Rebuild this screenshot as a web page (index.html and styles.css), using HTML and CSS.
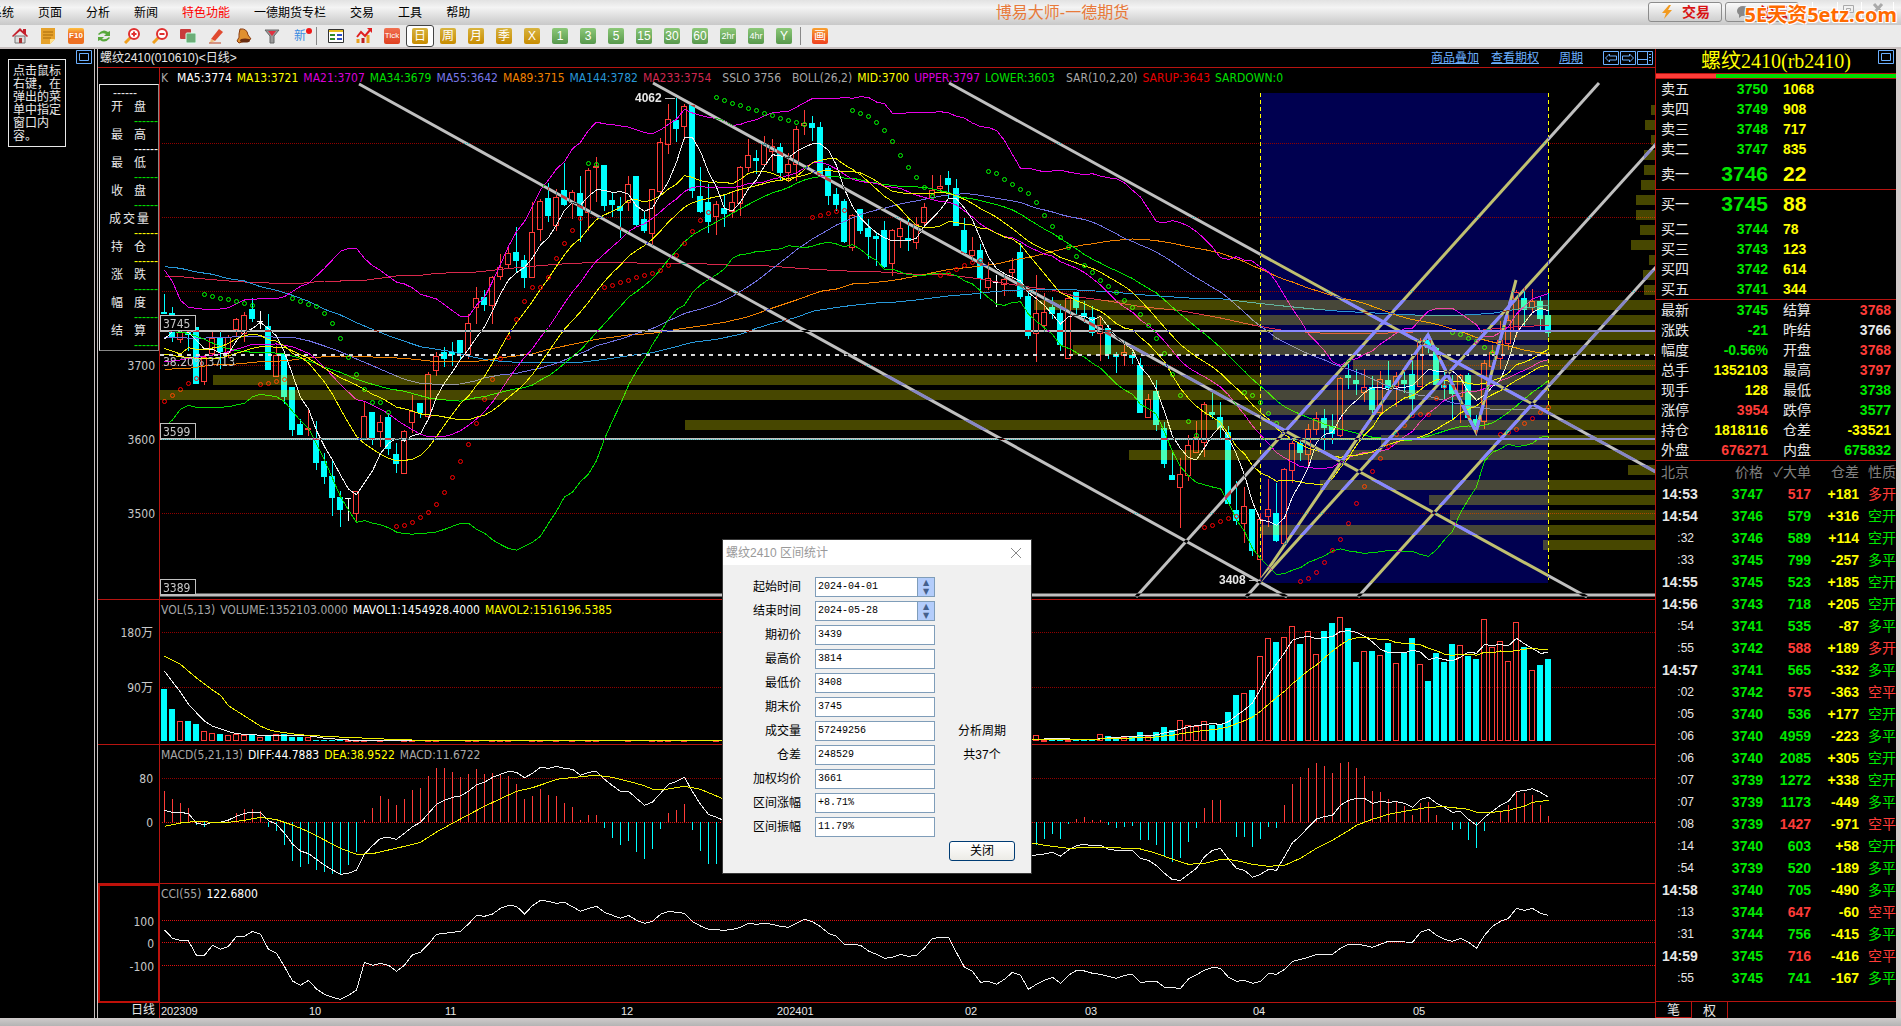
FILE: index.html
```html
<!DOCTYPE html>
<html lang="zh-CN">
<head>
<meta charset="utf-8">
<title>博易大师-一德期货</title>
<link rel="stylesheet" href="styles.css">
</head>
<body>
<div class="app">
  <header class="menubar">
    <nav class="menu">
      <a href="#">系统</a><a href="#">页面</a><a href="#">分析</a><a href="#">新闻</a><a href="#" class="hot">特色功能</a><a href="#">一德期货专栏</a><a href="#">交易</a><a href="#">工具</a><a href="#">帮助</a>
    </nav>
    <h1 class="app-title">博易大师-一德期货</h1>
    <div class="menu-actions">
      <button class="top-btn" type="button"><svg width="14" height="14" viewBox="0 0 14 14"><path d="M9 0 2 8h4L4 14l8-9H8l3-5z" fill="#f29a1f"/></svg>交易</button>
      <button class="top-btn" type="button"><svg width="16" height="14" viewBox="0 0 16 14"><ellipse cx="7" cy="6" rx="6" ry="5" fill="#888"/><path d="M3 9v4l4-3z" fill="#888"/><circle cx="12" cy="8" r="4" fill="#999"/></svg>论坛</button>
      <svg class="window-btns" width="86" height="24" viewBox="0 0 86 24"><g fill="none" stroke="#fff"><path d="M2.5 0v18M27.500 0v18M51.500 0v18M83.500 0v18"/></g><g fill="none" stroke="#aaa"><path d="M8.500 8.500h10v3h-10zM33.500 3.500h10v7h-10zM36.500 6.500h4v2h-4z"/><path d="m64 2 8 9m0-9-8 9" stroke-width="3"/></g></svg>
    </div>
    <div class="watermark">5E天资5etz.com</div>
  </header>

  <div class="toolbar">
    <button class="tool" type="button" aria-label="首页"><svg viewBox="0 0 16 16"><path d="M3 8h10v7H3z" fill="#ddd" stroke="#777"/><path d="M0 8 8 0l3 3V1h3v5l2 2-1 1-7-6-7 6z" fill="#c4202c"/><path d="M7 10h3v5H7z" fill="#a33"/></svg></button>
    <button class="tool" type="button" aria-label="便签"><svg viewBox="0 0 16 16"><path d="M1 0h14v11l-5 5H1z" fill="#e6a22c"/><path d="M3 4h10M3 7h10M3 10h8" stroke="#a86a08"/><path d="M10 16v-5h5z" fill="#ffe08a"/></svg></button>
    <button class="tool" type="button"><span class="chip chip-f10">F10</span></button>
    <button class="tool" type="button" aria-label="刷新"><svg viewBox="0 0 16 16"><path d="M2 6q5-6 10-2l2-1v5H8l2-2Q6 4 3 7zM14 10q-5 6-10 2l-2 1V9h6l-2 2q4 1 7-2z" fill="#58a83c"/></svg></button>
    <button class="tool" type="button" aria-label="放大"><svg viewBox="0 0 16 16"><path d="m1 15 6-6" stroke="#f0a020" stroke-width="3"/><circle cx="10" cy="6" r="5" fill="#fff" stroke="#e03030" stroke-width="2"/><path d="M7.500 6h5M10 3.500v5" stroke="#e03030" stroke-width="2"/></svg></button>
    <button class="tool" type="button" aria-label="缩小"><svg viewBox="0 0 16 16"><path d="m1 15 6-6" stroke="#f0a020" stroke-width="3"/><circle cx="10" cy="6" r="5" fill="#fff" stroke="#e03030" stroke-width="2"/><path d="M7.500 6h5" stroke="#e03030" stroke-width="2"/></svg></button>
    <button class="tool" type="button" aria-label="叠加"><svg viewBox="0 0 16 16"><rect x="0" y="1" width="11" height="10" rx="1" fill="#c83c3c"/><rect x="6" y="5" width="10" height="10" rx="1" fill="#6cae78" stroke="#dfe"/></svg></button>
    <button class="tool" type="button" aria-label="画线"><svg viewBox="0 0 16 16"><path d="m3 11 8-10 4 3-8 9z" fill="#e04a30"/><path d="m3 11-1 4 5-2z" fill="#f0c080"/><path d="M1 15h12" stroke="#c04020"/></svg></button>
    <button class="tool" type="button" aria-label="预警"><svg viewBox="0 0 16 16"><path d="M4 1q7-1 8 6l3 4-12 4-2-2q3-4 2-7z" fill="#e09030" stroke="#8a3c10"/><ellipse cx="9" cy="12.500" rx="5" ry="2" fill="#6a2c10"/></svg></button>
    <button class="tool" type="button" aria-label="筛选"><svg viewBox="0 0 16 16"><path d="M1 2h14l-5 6v7H6V8z" fill="#999" stroke="#666"/><path d="M4 3h8L8 8z" fill="#e03040"/></svg></button>
    <button class="tool tool-new" type="button">新</button>
    <span class="tool-sep"></span>
    <button class="tool" type="button" aria-label="报价"><svg viewBox="0 0 16 16"><path d="M.5 1.500h15v13H.5z" fill="#fff" stroke="#333"/><path d="M1 3h14" stroke="#e6c020" stroke-width="2"/><path d="M2 7h5M2 11h5" stroke="#2a8a2a" stroke-width="2"/><path d="M9 7h5M9 11h5" stroke="#2a50c8" stroke-width="2"/></svg></button>
    <button class="tool" type="button" aria-label="走势"><svg viewBox="0 0 16 16"><path d="M2 11v4M12 7v8" stroke="#e8a020" stroke-width="3"/><path d="M7 10v5" stroke="#c02020" stroke-width="3"/><path d="m1 9 4-5 4 4 5-6" stroke="#e02020" stroke-width="2" fill="none"/><path d="M11 0h5v5z" fill="#e02020"/></svg></button>
    <button class="tool" type="button"><span class="chip chip-red">Tick</span></button>
    <button class="tool selected" type="button"><span class="chip chip-gold">日</span></button>
    <button class="tool" type="button"><span class="chip chip-gold">周</span></button>
    <button class="tool" type="button"><span class="chip chip-gold">月</span></button>
    <button class="tool" type="button"><span class="chip chip-gold">季</span></button>
    <button class="tool" type="button"><span class="chip chip-gold">X</span></button>
    <button class="tool" type="button"><span class="chip chip-green">1</span></button>
    <button class="tool" type="button"><span class="chip chip-green">3</span></button>
    <button class="tool" type="button"><span class="chip chip-green">5</span></button>
    <button class="tool" type="button"><span class="chip chip-green">15</span></button>
    <button class="tool" type="button"><span class="chip chip-green">30</span></button>
    <button class="tool" type="button"><span class="chip chip-green">60</span></button>
    <button class="tool" type="button"><span class="chip chip-green small">2hr</span></button>
    <button class="tool" type="button"><span class="chip chip-green small">4hr</span></button>
    <button class="tool" type="button"><span class="chip chip-green">Y</span></button>
    <span class="tool-sep"></span>
    <button class="tool" type="button"><span class="chip chip-orange">画</span></button>
  </div>

  <main class="workspace">
    <aside class="side">
      <p class="side-hint">点击鼠标右键，在弹出的菜单中指定窗口内容。</p>
      <button class="frame-btn" type="button" aria-label="最大化"><svg width="16" height="14" viewBox="0 0 16 14"><path d="M.5.5h15v13H.5zM3.500 3.500h9v7h-9z" fill="none" stroke="#6cb0ff"/></svg></button>
    </aside>

    <section class="chart">
      <div class="chart-title">
        <h2>螺纹2410(010610)&lt;日线&gt;</h2>
        <nav class="chart-links">
          <a href="#">商品叠加</a><a href="#">查看期权</a><a href="#" class="period">周期</a>
          <svg width="50" height="14" viewBox="0 0 50 14" fill="none" stroke="#6cb0ff"><path d="M.5.5h15v13H.5zM17.500.5h15v13h-15zM34.500.5h15v13h-15z"/><path d="m2.500 7 4-4v2h7v4h-7v2zM30.500 7l-4-4v2h-7v4h7v2zM34.500 8.500h10M44.500.5v13M46 3.500h2M46 6.500h2M46 9.500h2"/></svg>
        </nav>
      </div>
      <div class="panels">
        <svg class="axis" id="axis-price"></svg>
        <div class="plot">
          <p class="legend legend-price">
            <span class="kind">K</span><span class="c-white">MA5:3774</span><span class="c-yellow">MA13:3721</span><span class="c-magenta">MA21:3707</span><span class="c-lime">MA34:3679</span><span class="c-violet">MA55:3642</span><span class="c-orange">MA89:3715</span><span class="c-blue">MA144:3782</span><span class="c-crimson">MA233:3754</span><span class="lead">SSLO 3756</span><span class="lead">BOLL(26,2)</span><span class="c-yellow">MID:3700</span><span class="c-magenta">UPPER:3797</span><span class="c-lime">LOWER:3603</span><span class="lead">SAR(10,2,20)</span><span class="c-red">SARUP:3643</span><span class="c-lime">SARDOWN:0</span>
          </p>
          <svg class="canvas" id="plot-price"></svg>
        </div>

        <svg class="axis" id="axis-vol"></svg>
        <div class="plot">
          <p class="legend"><span>VOL(5,13)</span><span>VOLUME:1352103.0000</span><span class="c-white">MAVOL1:1454928.4000</span><span class="c-yellow">MAVOL2:1516196.5385</span></p>
          <svg class="canvas" id="plot-vol"></svg>
        </div>

        <svg class="axis" id="axis-macd"></svg>
        <div class="plot">
          <p class="legend"><span>MACD(5,21,13)</span><span class="c-white">DIFF:44.7883</span><span class="c-yellow">DEA:38.9522</span><span>MACD:11.6722</span></p>
          <svg class="canvas" id="plot-macd"></svg>
        </div>

        <svg class="axis active" id="axis-cci"></svg>
        <div class="plot">
          <p class="legend"><span>CCI(55)</span><span class="c-white">122.6800</span></p>
          <svg class="canvas" id="plot-cci"></svg>
        </div>

        <div class="axis-name">日线</div>
        <svg class="dates" id="dates"></svg>
      </div>

      <dl class="cursor-box">
        <div><dt></dt><dd class="first">------</dd></div>
        <div><dt>开盘</dt><dd class="c-lime">------</dd></div>
        <div><dt>最高</dt><dd class="c-white">------</dd></div>
        <div><dt>最低</dt><dd class="c-lime">------</dd></div>
        <div><dt>收盘</dt><dd class="c-lime">------</dd></div>
        <div><dt class="three">成交量</dt><dd class="c-yellow">------</dd></div>
        <div><dt>持仓</dt><dd class="c-yellow">------</dd></div>
        <div><dt>涨跌</dt><dd class="c-lime">------</dd></div>
        <div><dt>幅度</dt><dd class="c-lime">------</dd></div>
        <div><dt>结算</dt><dd class="c-lime">------</dd></div>
      </dl>
    </section>

    <section class="quote">
      <div class="quote-title">
        <h2>螺纹2410(rb2410)</h2>
        <button class="frame-btn" type="button" aria-label="最大化"><svg width="16" height="14" viewBox="0 0 16 14"><path d="M.5.5h15v13H.5zM3.500 3.500h9v7h-9z" fill="none" stroke="#6cb0ff"/></svg></button>
      </div>
      <div class="ratio"><span class="ratio-sell"></span></div>
      <table class="book">
        <tbody>
          <tr><th>卖五</th><td>3750</td><td>1068</td></tr>
          <tr><th>卖四</th><td>3749</td><td>908</td></tr>
          <tr><th>卖三</th><td>3748</td><td>717</td></tr>
          <tr><th>卖二</th><td>3747</td><td>835</td></tr>
          <tr class="best"><th>卖一</th><td>3746</td><td>22</td></tr>
        </tbody>
        <tbody>
          <tr class="best"><th>买一</th><td>3745</td><td>88</td></tr>
          <tr><th>买二</th><td>3744</td><td>78</td></tr>
          <tr><th>买三</th><td>3743</td><td>123</td></tr>
          <tr><th>买四</th><td>3742</td><td>614</td></tr>
          <tr><th>买五</th><td>3741</td><td>344</td></tr>
        </tbody>
      </table>
      <table class="stats">
        <tbody>
          <tr><th>最新</th><td class="dn">3745</td><th>结算</th><td class="up">3768</td></tr>
          <tr><th>涨跌</th><td class="dn">-21</td><th>昨结</th><td class="eq">3766</td></tr>
          <tr><th>幅度</th><td class="dn">-0.56%</td><th>开盘</th><td class="up">3768</td></tr>
          <tr><th>总手</th><td class="qty">1352103</td><th>最高</th><td class="up">3797</td></tr>
          <tr><th>现手</th><td class="qty">128</td><th>最低</th><td class="dn">3738</td></tr>
          <tr><th>涨停</th><td class="up">3954</td><th>跌停</th><td class="dn">3577</td></tr>
          <tr><th>持仓</th><td class="qty">1818116</td><th>仓差</th><td class="qty">-33521</td></tr>
          <tr><th>外盘</th><td class="up">676271</td><th>内盘</th><td class="dn">675832</td></tr>
        </tbody>
      </table>
      <table class="ticks">
        <thead><tr><th class="t">北京</th><th>价格</th><th>✓大单</th><th>仓差</th><th>性质</th></tr></thead>
        <tbody id="ticks"></tbody>
      </table>
      <div class="tabs"><button class="tab on" type="button">笔</button><button class="tab" type="button">权</button></div>
    </section>
  </main>

  <footer class="statusbar"></footer>
</div>

<form class="dialog">
  <div class="dialog-head"><h2>螺纹2410 区间统计</h2><button class="dialog-x" type="button" aria-label="关闭窗口"><svg width="12" height="12" viewBox="0 0 12 12"><path d="m1 1 10 10M11 1 1 11" stroke="#888" fill="none"/></svg></button></div>
  <div class="dialog-body">
    <label for="f1">起始时间</label><div class="field"><input id="f1" value="2024-04-01"><span class="spin"><button type="button" aria-label="增加">▲</button><button type="button" aria-label="减少">▼</button></span></div><span></span>
    <label for="f2">结束时间</label><div class="field"><input id="f2" value="2024-05-28"><span class="spin"><button type="button" aria-label="增加">▲</button><button type="button" aria-label="减少">▼</button></span></div><span></span>
    <label for="f3">期初价</label><div class="field"><input id="f3" value="3439"></div><span></span>
    <label for="f4">最高价</label><div class="field"><input id="f4" value="3814"></div><span></span>
    <label for="f5">最低价</label><div class="field"><input id="f5" value="3408"></div><span></span>
    <label for="f6">期末价</label><div class="field"><input id="f6" value="3745"></div><span></span>
    <label for="f7">成交量</label><div class="field"><input id="f7" value="57249256"></div><span class="note">分析周期</span>
    <label for="f8">仓差</label><div class="field"><input id="f8" value="248529"></div><span class="note">共37个</span>
    <label for="f9">加权均价</label><div class="field"><input id="f9" value="3661"></div><span></span>
    <label for="f10">区间涨幅</label><div class="field"><input id="f10" value="+8.71%"></div><span></span>
    <label for="f11">区间振幅</label><div class="field"><input id="f11" value="11.79%"></div><span></span>
    <button class="close-btn" type="button">关闭</button>
  </div>
</form>
<script src="chart.js"></script>
</body>
</html>
```
FILE: styles.css
```css
* { box-sizing: border-box; }
body {
  margin: 0;
  background: #000;
  color: #e8e8e8;
  font: 12px/16px "Liberation Sans", "Noto Sans CJK SC", sans-serif;
  overflow: hidden;
}
button { font: inherit; padding: 0; border: 0; background: none; color: inherit; }
h1, h2, p, dl, dd { margin: 0; font-weight: normal; }
h2 { font-size: 12px; }
a { color: inherit; text-decoration: none; }
table { border-collapse: collapse; table-layout: fixed; width: 100%; }
th, td { padding: 0; font-weight: normal; }
svg { display: block; }
.app { height: 100vh; display: grid; grid-template-rows: 25px 24px minmax(0, 1fr) 8px; }

/* menu */
.menubar {
  position: relative;
  display: grid;
  grid-template-columns: 1fr auto 1fr;
  align-items: center;
  background: linear-gradient(#e2e2e2, #f4f4f4 30%, #c8c8c8);
  color: #000;
}
.menu { display: flex; gap: 24px; margin-left: -10px; white-space: nowrap; }
.hot { color: #f00; }
.app-title { font-size: 16px; line-height: 24px; color: #e87a3a; padding-left: 224px; }
.menu-actions { display: flex; gap: 3px; justify-content: flex-end; align-self: start; padding: 2px 5px 0 0; }
.top-btn {
  display: flex;
  align-items: center;
  justify-content: center;
  gap: 8px;
  width: 74px;
  height: 20px;
  border: 1px solid #8c8c8c;
  border-radius: 3px;
  background: linear-gradient(#fafafa, #cfcfcf);
  color: #d81414;
  font-size: 14px;
  font-weight: bold;
}
.window-btns { margin-left: 8px; }
.watermark {
  position: absolute;
  right: 4px;
  top: 1px;
  font: bold 20px/28px "Noto Sans", "Noto Sans CJK SC", sans-serif;
  color: #ff6a00;
  text-shadow: 1px 1px #fff, -1px -1px #fff, 1px -1px #fff, -1px 1px #fff;
}

/* toolbar */
.toolbar { display: flex; align-items: center; background: #ebebeb; border-bottom: 2px solid #c8c0c0; padding-left: 6px; }
.tool { width: 28px; height: 22px; display: grid; place-items: center; }
.tool svg { width: 16px; height: 16px; }
.tool-new { position: relative; color: #3c8ce0; }
.tool-new::after { content: ""; position: absolute; right: 2px; top: 3px; width: 6px; height: 6px; border-radius: 50%; background: #f01818; }
.tool.selected { border: 1px solid #444; border-radius: 3px; background: #fff; }
.tool-sep { width: 8px; height: 18px; border-left: 1px solid #888; margin-left: 2px; margin-right: -2px; }
.chip { width: 16px; height: 16px; border-radius: 2px; color: #fff; text-align: center; font-size: 12px; line-height: 16px; }
.chip.small { font-size: 9px; }
.chip-red { background: linear-gradient(#f07050, #e04020); font-size: 8px; }
.chip-f10 { background: linear-gradient(#ffc040, #ee7022 40%); font-size: 8px; font-weight: bold; }
.chip-gold { background: linear-gradient(#d8b440, #c88c00); }
.chip-green { background: linear-gradient(#8cc878, #58984c); }
.chip-orange { background: linear-gradient(#f8a030, #f04020); }

/* workspace */
.workspace { display: grid; grid-template: minmax(0, 1fr) / 98px minmax(0, 1fr) 246px; min-height: 0; }
.side { display: flex; align-items: flex-start; justify-content: space-between; padding: 0 0 0 8px; border-right: 4px double #c8c0c0; }
.side-hint { width: 58px; margin-top: 10px; padding: 5px 3px 3px 4px; border: 1px solid #e8e8e8; line-height: 13px; }
.frame-btn { margin: 1px 2px 0 0; align-self: start; }

.chart { position: relative; display: grid; grid-template-rows: 19px minmax(0, 1fr); min-width: 0; }
.chart-title { display: flex; justify-content: space-between; align-items: center; border-bottom: 1px solid #b81410; padding: 0 2px; }
.chart-links { display: flex; gap: 12px; color: #6cb0ff; align-items: center; }
.chart-links a { text-decoration: underline; }
.chart-links .period { margin: 0 8px; }
.panels {
  display: grid;
  grid-template-columns: 61px minmax(0, 1fr);
  grid-template-rows: minmax(0, 532fr) minmax(0, 145fr) minmax(0, 139fr) minmax(0, 119fr) 15px;
  min-height: 0;
}
.axis { width: 100%; height: 100%; min-height: 0; border-bottom: 1px solid #b81410; }
.axis.active { border: 2px solid #c01008; border-right-width: 1px; }
.plot { display: grid; grid-template: minmax(0, 1fr) / minmax(0, 1fr); border-left: 1px solid #b81410; border-bottom: 1px solid #b81410; min-height: 0; }
.canvas { grid-area: 1 / 1; width: 100%; height: 100%; min-height: 0; shape-rendering: crispEdges; isolation: isolate; }
.legend {
  grid-area: 1 / 1;
  z-index: 1;
  display: flex;
  gap: 5px;
  height: 16px;
  margin: 2px 1px;
  color: #a8a8a8;
  font: 12px/16px "DejaVu Sans Condensed", "Noto Sans", sans-serif;
  white-space: nowrap;
}
.legend-price .kind { padding-right: 4px; }
.legend-price .lead { padding-left: 6px; }
.axis text, .canvas text { font: 12px "DejaVu Sans Condensed", "Noto Sans", "Noto Sans CJK SC", sans-serif; fill: #c8c8c8; }
.axis text { text-anchor: end; }
.canvas .mark { font: bold 12px "Liberation Sans", sans-serif; fill: #e8e8e8; }
.axis-name { text-align: right; padding-right: 4px; line-height: 15px; }
.dates { width: 100%; height: 15px; border-left: 1px solid #b81410; }
.dates text { font: 11px "Liberation Sans", sans-serif; fill: #e8e8e8; }
.c-white { color: #fff; }
.c-yellow { color: #ff0; }
.c-magenta { color: #d800d8; }
.c-lime { color: #00e000; }
.c-violet { color: #7878e8; }
.c-orange { color: #f08000; }
.c-blue { color: #2898d8; }
.c-crimson { color: #d02850; }
.c-red { color: #e80000; }

/* floating cursor values */
.cursor-box {
  position: absolute;
  left: 1px;
  top: 35px;
  width: 60px;
  height: 267px;
  border: 1px solid #e8e8e8;
  border-right-color: #888;
  border-bottom-color: #888;
  background: #000;
}
.cursor-box div { height: 28px; }
.cursor-box div:first-child { height: 15px; }
.cursor-box dt { height: 14px; line-height: 14px; padding: 0 12px 0 11px; text-align-last: justify; }
.cursor-box dt:empty { display: none; }
.cursor-box .three { padding: 0 9px; }
.cursor-box dd { text-align: right; height: 14px; line-height: 14px; }
.cursor-box .first { text-align: center; padding-right: 8px; line-height: 16px; }

/* quote */
.quote { display: flex; flex-direction: column; border-left: 1px solid #b81410; border-right: 5px solid #d4cccc; min-width: 0; background: #000; }
.quote-title { display: grid; grid-template-columns: 18px 1fr 18px; height: 24px; }
.quote-title h2 { grid-column: 2; text-align: center; font: 20px/24px "Liberation Serif", "Noto Sans CJK SC", serif; color: #ff0; }
.ratio { height: 6px; border: solid #b81410; border-width: 1px 0; background: #00e000; }
.ratio-sell { display: block; width: 25%; height: 4px; background: #ff3c38; }
.book th, .stats th { text-align: left; font-size: 14px; line-height: 20px; padding-left: 5px; }
.book td, .stats td, .ticks td { font-weight: bold; font-size: 14px; }
.book tr { height: 20px; }
.book .best { height: 30px; }
.book tbody { border-bottom: 1px solid #b81410; }
.book th { width: 50px; }
.book td:nth-child(2) { width: 62px; text-align: right; color: #00e800; }
.book td:nth-child(3) { padding-left: 15px; color: #ff0; }
.book .best td { font-size: 21px; }
.stats tbody { border-bottom: 1px solid #b81410; }
.stats tr { height: 20px; }
.stats th { width: 37px; }
.stats th:nth-child(3) { width: 52px; padding-left: 15px; }
.stats td { text-align: right; }
.stats td:nth-child(2) { width: 75px; }
.stats td:nth-child(4) { padding-right: 5px; }
.up { color: #ff3c38; }
.dn { color: #00e800; }
.eq { color: #e8e8e8; }
.qty { color: #ff0; }
.ticks th { font-size: 14px; color: #808080; text-align: right; }
.ticks tr { height: 22px; }
.ticks td { text-align: right; white-space: nowrap; }
.ticks th.t { width: 48px; text-align: left; padding-left: 5px; }
.ticks th:nth-child(2) { width: 59px; }
.ticks th:nth-child(3) { width: 48px; white-space: nowrap; }
.ticks th:nth-child(4) { width: 48px; }
.ticks td.t { text-align: left; padding-left: 6px; }
.ticks td.s { font-size: 12px; font-weight: normal; text-align: right; padding-right: 10px; }
.ticks td:last-child { font-weight: normal; }
.tabs { margin-top: auto; display: flex; height: 17px; border-top: 1px solid #b81410; }
.tab { width: 36px; font-size: 13px; line-height: 15px; border-right: 1px solid #b81410; }
.tab.on { border-bottom: 1px solid #b81410; }
.statusbar { background: linear-gradient(#cfcbcb, #b4b4b4); }

/* range statistics window */
.dialog { position: absolute; left: 722px; top: 539px; width: 310px; background: #f0f0f0; color: #000; border: 1px solid #383838; }
.dialog-head { display: flex; justify-content: space-between; align-items: center; height: 25px; padding: 0 9px 0 3px; background: #fff; color: #999; }
.dialog-body { display: grid; grid-template-columns: 78px 120px 1fr; column-gap: 14px; row-gap: 4px; padding: 12px 16px 12px 0; }
.dialog-body label { text-align: right; line-height: 20px; }
.field { display: flex; height: 20px; border: 1px solid #7f9db9; background: #fff; }
.field input { flex: 1; min-width: 0; border: 0; padding: 0 2px; background: none; font: 10px/18px "Liberation Mono", monospace; color: #000; }
.spin { width: 17px; border-left: 1px solid #7f9db9; background: #b4cdfb; display: grid; grid-template-rows: 9px 9px; }
.spin button { font: 8px/9px "DejaVu Sans", sans-serif; color: #44608c; }
.note { text-align: center; line-height: 20px; }
.close-btn { grid-column: 3; height: 20px; border: 1px solid #003c74; border-radius: 3px; background: linear-gradient(#fff, #ecebe6); }
```
FILE: chart.js
```js
// Levels are stored in thirds of a pixel; each pane subtracts its own offset.
var STEP = 8;
var CY = '#00ffff', RD = '#ff3c38';

function cx(i) { return 4 + STEP * i; }

// kind, high, body top, body bottom, low
var bars = [
'd642,697,702,702','d680,698,773,785','u752,755,778,790','d740,752,765,812','d740,741,911,911','u825,830,902,914','u755,775,820,825','d752,772,815,866','u765,772,815,835','u714,718,748,768',
'u697,706,758,785','d655,687,716,726','w692,723,725,746','d702,738,869,869','u798,826,887,887','d820,822,950,971','d921,921,1049,1067','d1018,1032,1065,1065','u985,1045,1048,1067','d1023,1078,1149,1170',
'd1118,1143,1190,1212','d1138,1188,1253,1307','d1232,1251,1289,1340','w1255,1255,1257,1322','u1234,1234,1300,1322','u963,1009,1075,1078','d996,996,1077,1094','u1005,1027,1052,1101','d1000,1011,1106,1124','d1088,1122,1152,1178',
'u1050,1054,1178,1178','u945,994,1025,1060','d968,969,1000,1014','u877,883,1007,1010','u815,829,869,887','d802,816,837,860','d786,816,826,857','d780,780,819,840','u703,728,821,836','u622,653,680,731',
'd630,651,675,692','u588,592,674,731','u522,562,587,601','u502,518,553,563','d441,516,543,578','d525,540,594,623','u365,455,592,594','u358,364,446,482','d310,354,408,426','u328,352,434,453',
'd249,330,375,377','u330,337,365,417','d288,339,408,485','u265,271,395,452','u232,258,262,365','d255,255,377,392','d335,360,375,410','d350,378,392,473','u288,313,365,392','d288,289,435,440',
'd392,417,453,459','u327,328,458,497','u174,187,332,340','u72,118,191,221','d55,120,147,185','u72,79,137,180','d75,76,332,354','d261,348,396,399','d312,366,426,459','u363,373,409,464',
'd341,384,402,440','u332,367,392,413','u258,262,368,408','u177,226,262,276','d209,234,242,282','u168,192,253,256','u177,199,212,273','d190,201,279,299','u220,253,277,304','u139,148,253,302',
'u90,130,134,165','d109,129,144,182','d126,141,285,290','d258,264,348,374','d325,342,374,393','d358,363,486,488','u402,406,502,512','d387,387,453,461','d418,445,471,536','d458,467,476,558',
'd424,450,561,563','u446,451,550,587','u421,443,469,504','d413,474,482,512','u412,433,485,506','u370,382,425,438','u285,331,352,355','u286,318,325,340','d273,294,315,357','d297,324,437,438',
'd414,450,519,521','u471,511,524,545','d492,510,597,657','u546,595,621,629','w585,606,608,682','u585,597,613,648','u534,566,577,600','d489,516,651,657','d630,648,768,776','u586,700,758,846',
'u639,697,734,755','d651,682,702,718','d672,699,794,812','u652,655,835,836','d636,636,684,705','d663,699,711,730','d678,711,758,768','u712,735,760,843','d736,744,822,838','d815,823,830,878',
'u784,817,825,857','d815,825,835,852','d833,855,998,1000','u942,956,1012,1015','d899,933,1035,1053','d1025,1043,1152,1164','d1118,1186,1200,1200','u1135,1183,1222,1343','u1065,1094,1184,1202','u1024,1070,1117,1118',
'u966,971,1087,1131','d939,996,1005,1018','d966,1011,1045,1076','d1037,1056,1271,1273','d1203,1290,1323,1334','u1220,1279,1330,1388','d1286,1287,1412,1428','u1300,1318,1436,1504','u1198,1288,1307,1340','d1210,1298,1383,1385',
'u1165,1168,1390,1395','u1083,1090,1171,1210','d1078,1090,1118,1144','u1033,1048,1123,1165','u996,1015,1046,1066','d988,1014,1043,1110','d1002,1038,1061,1092','u890,895,1066,1072','d852,885,895,928','d868,900,912,944',
'u868,921,937,966','d887,921,990,1000','u872,898,997,1005','d844,900,925,930','u876,888,918,980','d870,900,911,940','d838,881,957,992','u775,781,919,920','d762,780,803,820','d800,804,914,915',
'd875,915,925,958','d885,912,942,1018','u882,886,948,1030','d878,886,1013,1015','d1005,1018,1037,1063','u840,850,1023,1048','u795,815,857,870','u722,780,835,868','u700,720,790,810','u630,635,750,770',
'd622,653,690,737','u627,662,680,700','d652,662,717,757','d640,705,758,772'
].map(function (s) {
  var n = s.slice(1).split(',').map(Number);
  return { k: s[0], h: n[0], t: n[1], b: n[2], l: n[3], c: s[0] === 'd' ? n[2] : n[1] };
});
var closes = bars.map(function (b) { return b.c; });

// "index:level" pairs
function pts(s) { return s.trim().split(/\s+/).map(function (p) { return p.split(':').map(Number); }); }
function run(start, list) { return list.map(function (v, k) { return [start + k, v]; }); }

function average(src, n) {
  var out = [];
  for (var i = n - 1; i < src.length; i++) {
    var s = 0;
    for (var k = 0; k < n; k++) s += src[i - k];
    out.push([i, s / n]);
  }
  return out;
}
function band(src, n, dir) {
  return average(src, n).map(function (p) {
    var v = 0;
    for (var k = 0; k < n; k++) v += Math.pow(src[p[0] - k] - p[1], 2);
    return [p[0], p[1] + dir * 2 * Math.sqrt(v / n)];
  });
}

function Pane(id, off) {
  this.el = document.getElementById(id);
  this.off = off;
  this.out = '';
  this.w = this.el.clientWidth;
}
Pane.prototype.y = function (v) { return Math.round(v / 3 + this.off); };
Pane.prototype.rect = function (x, y, w, h, a) { this.out += '<rect x="' + x + '" y="' + y + '" width="' + w + '" height="' + h + '" ' + a + '/>'; };
Pane.prototype.line = function (x1, y1, x2, y2, a) { this.out += '<path d="M' + x1 + ' ' + y1 + 'L' + x2 + ' ' + y2 + '" fill="none" ' + a + '/>'; };
Pane.prototype.text = function (x, y, s, c) { this.out += '<text x="' + x + '" y="' + y + '" class="' + (c || '') + '">' + s + '</text>'; };
Pane.prototype.poly = function (list, color) {
  var me = this;
  this.out += '<polyline fill="none" stroke="' + color + '" points="' + list.map(function (p) {
    return (cx(p[0]) + 0.5) + ',' + (p[1] / 3 + me.off).toFixed(1);
  }).join(' ') + '"/>';
};
Pane.prototype.grid = function (levels, color) {
  var me = this;
  levels.forEach(function (v) { var y = me.y(v) + 0.5; me.line(2, y, me.w, y, 'stroke="' + color + '" stroke-dasharray="1 1"'); });
};
Pane.prototype.done = function () { this.el.innerHTML = this.out; };

function drawPrice() {
  var p = new Pane('plot-price', 12);
  var right = p.w;
  p.rect(1100, 25, 288, 490, 'fill="#000050"');
  p.grid([190, 412, 634, 856, 1078, 1300], '#900000');
  p.line(1100.5, 25, 1100.5, 515, 'stroke="#ff0" stroke-dasharray="4 3"');
  p.line(1388.5, 25, 1388.5, 515, 'stroke="#ff0" stroke-dasharray="4 3"');

  bars.forEach(function (b, i) {
    var x = cx(i), t = p.y(b.t), h = Math.max(1, p.y(b.b) - t), hi = p.y(b.h), lo = p.y(b.l);
    if (b.k === 'd') {
      p.rect(x, hi, 1, lo - hi, 'fill="' + CY + '"');
      p.rect(x - 3, t, 6, h, 'fill="' + CY + '"');
    } else if (b.k === 'w') {
      p.rect(x, hi, 1, lo - hi, 'fill="#fff"');
      p.rect(x - 3, t, 6, 1, 'fill="#fff"');
    } else {
      p.rect(x, hi, 1, t - hi, 'fill="' + RD + '"');
      p.rect(x, t + h, 1, Math.max(0, lo - p.y(b.b)), 'fill="' + RD + '"');
      p.rect(x - 2.5, t + 0.5, 5, h, 'fill="none" stroke="' + RD + '"');
    }
  });

  p.poly(pts('0:588 2:590 4:595 8:603 10:606 14:610 17:610 20:603 22:603 25:601 29:588 32:586 34:580 39:576 44:563 49:553 53:548 57:547 60:550 67:551 71:556 75:557 81:568 86:574 89:575 94:583 98:585 102:597 107:618 111:630 114:650 118:663 122:680 127:692 132:714 136:735 140:752 145:760 152:760 157:755 164:752 168:742 173:736'), '#d8284c');
  p.poly(pts('0:560 2:565 4:576 6:583 8:596 10:603 12:620 14:631 16:646 18:664 20:688 22:705 24:728 26:748 28:767 30:784 32:800 34:808 36:815 38:828 40:838 42:844 44:847 49:847 52:847 56:835 58:827 61:818 63:806 66:787 69:778 72:763 74:745 76:730 79:712 81:694 83:686 86:676 89:669 91:667 94:660 98:648 101:642 104:634 107:630 110:628 114:630 118:635 123:646 128:654 132:656 135:665 139:676 144:688 147:694 152:700 157:706 162:706 166:700 169:688 173:676'), '#2898d8');
  p.poly(pts('0:868 3:865 6:855 9:852 12:845 14:844 16:840 18:833 22:828 26:831 30:835 34:845 37:846 40:842 42:833 44:828 46:822 48:808 50:798 52:788 54:778 58:765 60:762 62:757 64:748 67:738 70:727 73:710 76:684 79:660 82:634 84:627 86:612').concat(average(closes, 89)), '#f08000');
  p.poly(pts('0:772 4:775 8:772 10:768 12:768 14:772 16:772 18:782 20:798 22:815 24:837 26:857 28:878 30:898 32:910 34:913 37:912 39:902 40:893 42:885 44:880 47:864 49:850 51:830 53:810').concat(average(closes, 55)), '#7070e0');
  p.poly(pts('0:740 1:755 3:760 5:778 7:800 9:812 11:817 13:817 15:822 17:835 19:850 20:862 22:877 24:898 26:913 28:926 30:934 32:947').concat(average(closes, 34)), '#00e800');
  p.poly(pts('0:845 2:840 4:832 7:822 9:808 11:793 14:792 16:800 18:820 19:838').concat(average(closes, 21)), '#e800e8');
  p.poly(pts('0:805 1:814 2:822 3:803 4:808 5:810 6:804 7:800 8:790 9:776 10:767 11:763').concat(average(closes, 13)), '#f0f000');
  p.poly(pts('0:822 2:830 4:835 7:834 9:820 11:805 12:800 15:802 18:835 20:865 22:893 24:915').concat(average(closes, 26)), '#f0f000');
  p.poly(pts('0:570 1:605 2:661 3:682 5:688 7:687 8:683 10:660 12:656 14:656 15:650 17:619 18:610 20:565 22:514 23:505 24:505').concat(band(closes, 26, -1)), '#e800e8');
  p.poly(pts('0:1040 1:1020 2:988 3:976 4:982 7:982 8:980 10:970 11:950 12:943 14:950 15:965 17:1022 18:1045 20:1140 22:1250 23:1290 24:1327').concat(band(closes, 26, 1)), '#00d800');
  p.poly(pts('0:777 1:755 2:752 3:757').concat(average(closes, 5)), '#f0f0f0');

  [['g', 5, [642, 649, 655, 658, 664, 670, 674]], ['g', 16, [655, 664, 673, 679, 700, 730, 775, 832, 883, 928, 967, 967, 997]],
   ['r', 0, [964, 946, 928, 910, 895]], ['r', 12, [913, 910, 904, 898]],
   ['r', 29, [1338, 1336, 1327, 1312, 1297, 1273, 1237, 1192, 1144, 1093, 1030, 958, 898, 835, 772, 718, 664, 622, 622, 592, 535, 490, 451, 415]],
   ['g', 53, [250, 253]], ['r', 55, [622, 616, 607, 601, 592, 586, 580, 571, 556, 526, 490, 454, 421, 397]],
   ['g', 69, [52, 61, 70, 76, 85, 91, 100, 106, 115, 121, 127, 133]], ['r', 81, [412, 406, 400, 394, 391]],
   ['g', 86, [91, 100, 109, 127, 151, 184, 226, 262, 292, 322, 349]], ['r', 97, [586, 580, 568, 556, 547, 541]],
   ['g', 103, [274, 280, 298, 313, 328, 340, 367, 406, 439, 472, 502, 529, 556, 577, 601, 619, 637, 661, 682, 703, 736, 775, 820, 883, 946, 1024, 1066]],
   ['r', 130, [1342, 1336, 1324, 1315, 1309]], ['g', 135, [937, 946, 967, 1000, 1030]],
   ['r', 142, [1504, 1495, 1477, 1447, 1411, 1378, 1330, 1270, 1219, 1174, 1135, 1099, 1063, 1036, 1006, 1003, 1003, 955, 919]],
   ['g', 161, [757, 763, 775, 784, 802, 817]], ['r', 167, [1063, 1057, 1048, 1030, 1015, 997, 982]]
  ].forEach(function (s) {
    run(s[1], s[2]).forEach(function (q) {
      p.out += '<circle cx="' + (cx(q[0]) + 0.5) + '" cy="' + (p.y(q[1]) + 0.5) + '" r="2" fill="none" shape-rendering="auto" stroke="' + (s[0] === 'g' ? '#00ff00' : '#ff0000') + '"/>';
    });
  });

  // traded-volume profile, one bar per price band, anchored to the right edge
  var clipAll = '', clipSel = '';
  [4, 10, 4, 11, 11, 14, 19, 19, 15, 24, 6, 12, 11, 621, 558, 382, 582, 302, 1442, 1496, 451, 970, 274, 526, 27, 335, 226, 205, 395, 112].forEach(function (w, k) {
    var x = right - w, y = 37 + 15 * k, sx = Math.max(x, 1100);
    p.rect(x, y, w, 10, 'fill="#ff0" fill-opacity="0.28"');
    clipAll += '<rect x="' + x + '" y="' + y + '" width="' + w + '" height="10"/>';
    if (sx < 1388) clipSel += '<rect x="' + sx + '" y="' + y + '" width="' + (1388 - sx) + '" height="10"/>';
  });
  p.out += '<clipPath id="profile">' + clipAll + '</clipPath><clipPath id="profile-sel">' + clipSel + '</clipPath>';

  // drawn levels and channels; they change colour where they cross the profile
  p.line(0, 287, right, 287, 'stroke="#d8d8d8" stroke-width="2" stroke-dasharray="4 5"');
  var shapes = [[0, 263, right, 263, 2], [0, 371, right, 371, 2], [0, 527, right, 527, 3], [199, 16, 1127, 529, 3], [493, 15, 1427, 529, 3], [789, 15, 1496, 404, 3], [976, 529, 1439, 15, 3], [1086, 529, 1496, 76, 3], [1198, 529, 1496, 199, 3]].map(function (l) {
    return '<path stroke-width="' + l[4] + '" d="M' + l[0] + ' ' + l[1] + 'L' + l[2] + ' ' + l[3] + '"/>';
  });
  shapes.push('<path stroke-width="3" d="M1100 513 1268 267 1316 364 1356 212"/>');
  var blend = shapes.map(function (s) { return s.replace('<path', '<path style="mix-blend-mode:difference"'); });
  p.out += '<g fill="none" stroke="#c0c0c0" shape-rendering="auto">' + blend.join('') + '</g>';
  p.out += '<g fill="none" stroke="#8888c4" clip-path="url(#profile)" shape-rendering="auto">' + shapes.join('') + '</g>';
  p.out += '<g fill="none" stroke="#8888ff" clip-path="url(#profile-sel)" shape-rendering="auto">' + shapes.join('') + '</g>';

  [[247, '3745'], [355, '3599'], [511, '3389']].forEach(function (b) {
    p.rect(0.5, b[0] + 0.5, 35, 15, 'fill="#000" stroke="#c0c0c0"');
    p.text(3, b[0] + 13, b[1]);
  });
  p.text(3, 298, '38.20% 3713');
  p.text(475, 34, '4062', 'mark');
  p.line(505, 30.5, 515, 30.5, 'stroke="#c0c0c0"');
  p.text(1059, 516, '3408', 'mark');
  p.line(1089, 512.5, 1100, 512.5, 'stroke="#c0c0c0"');
  p.done();
}

function drawVolume() {
  var p = new Pane('plot-vol', -10);
  var v = [297, 357, 393, 393, 402, 423, 430, 432, 436, 433, 434, 435, 441, 438, 432, 432, 441, 440, 442];
  while (v.length < 109) v.push(450);
  v = v.concat([436, 449, 449, 449, 449, 449, 449, 449, 433, 438, 441, 441, 441, 426, 438, 426, 411, 420, 391, 406, 408, 394, 405, 403, 366, 315, 310, 300, 199, 145, 156, 142, 109, 162, 124, 193, 123, 99, 82, 114, 216, 184, 183, 196, 159, 220, 186, 144, 223, 273, 189, 216, 162, 166, 198, 207, 88, 172, 154, 214, 97, 171, 241, 225, 207]);
  p.grid([127, 292], '#900000');
  v.forEach(function (y, i) {
    var t = p.y(y), h = 141 - t;
    if (bars[i].k === 'd') p.rect(cx(i) - 3, t, 6, h, 'fill="' + CY + '"');
    else p.rect(cx(i) - 2.5, t + 0.5, 5, Math.max(0.5, h - 1), 'fill="none" stroke="' + RD + '"');
  });
  p.poly(pts('0:244 1:275 2:307 3:343').concat(average(v, 5)), '#f0f0f0');
  p.poly(pts('0:199 2:223 4:264 6:300 7:316 8:347 10:378').concat(average(v, 13)), '#f0f000');
  p.done();
}

function drawMacd() {
  var p = new Pane('plot-macd', -155);
  p.grid([565], '#900000');
  p.grid([697], '#e01010');
  var early = [603, 627, 639, 654, 705, 710, 697, 697, 690, 669, 657, 657, 663, 711, 723, 765, 812, 830, 822, 839, 846, 851, 852, 825, 785, 690, 654, 618, 627, 645, 627, 600, 594, 558, 534, 534, 546, 561, 552, 537, 552, 549, 552, 558, 582, 627, 618, 597, 615, 618, 639, 651, 690, 675, 675, 713, 743, 765, 752, 785, 806, 777, 717, 669, 660, 642, 720, 782, 822, 822];
  var late = [765, 747, 731, 747, 702, 687, 681, 690, 690, 705, 714, 711, 708, 750, 750, 765, 800, 815, 803, 756, 714, 654, 630, 630, 696, 741, 741, 771, 747, 711, 714, 645, 582, 561, 534, 519, 528, 549, 519, 516, 534, 558, 603, 606, 627, 634, 648, 675, 640, 636, 675, 697, 720, 717, 750, 774, 723, 693, 665, 645, 604, 609, 615, 645, 678];
  run(0, early).concat(run(109, late)).forEach(function (q) {
    var z = p.y(697), y = p.y(q[1]);
    p.rect(cx(q[0]), Math.min(z, y), 1, Math.abs(z - y), 'fill="' + (q[1] < 697 ? RD : CY) + '"');
  });
  p.poly(pts('0:661 1:667 2:667 3:671 4:699 5:704 6:697 7:697 8:690 9:679 10:670 11:667 12:667 13:692 14:703 15:730 16:762 17:783 18:791 19:808 20:826 21:840 22:853 23:850 24:840 25:792 26:767 27:745 28:742 29:748 30:730 31:710 32:697 33:670 34:643 35:631 36:622 37:618 38:604 39:584 40:577 41:562 42:553 43:544 44:547 45:563 46:550 47:532 48:535 49:529 50:535 51:538 52:556 53:547 54:544 55:568 56:587 57:604 58:604 59:625 60:646 61:636 62:610 63:583 64:574 65:562 66:605 67:643 68:673 69:682 70:692 108:796 109:795 110:792 111:787 112:798 113:780 114:767 115:763 116:768 117:766 118:778 119:781 121:781 122:805 123:811 124:827 125:850 126:869 127:871 128:853 129:835 130:800 131:781 132:775 133:808 134:835 135:841 136:862 137:853 138:838 139:841 140:800 141:758 142:737 143:711 144:687 145:680 146:676 147:646 148:631 149:625 150:625 151:640 152:634 153:637 154:635 155:640 156:652 157:628 158:622 159:640 160:652 161:667 162:664 163:688 164:706 165:682 166:664 167:646 168:634 169:604 170:602 171:596 172:607 173:622'), '#f0f0f0');
  p.poly(pts('0:709 2:699 4:694 6:697 8:697 10:691 12:682 14:689 16:705 18:725 20:750 22:775 24:793 26:791 28:780 30:769 32:757 34:726 36:700 38:674 40:649 42:626 44:604 46:593 48:577 49:568 52:560 54:556 56:562 58:574 60:587 61:598 63:597 65:589 67:598 69:618 70:629 108:757 110:766 113:775 116:772 121:775 122:777 124:790 126:808 128:823 130:820 132:808 133:808 135:817 136:823 138:829 140:826 142:805 144:775 146:751 148:722 149:706 151:688 153:673 155:664 158:652 160:650 163:658 164:667 166:667 168:661 170:648 171:637 173:631'), '#f0f000');
  p.done();
}

function drawCci() {
  var p = new Pane('plot-cci', -294);
  p.grid([991, 1057, 1126], '#e01010');
  p.poly(pts('0:1020 1:1045 2:1051 3:1053 4:1096 5:1096 6:1066 7:1078 8:1069 9:1039 10:1039 11:1024 12:1033 13:1078 14:1090 15:1130 16:1173 17:1186 18:1171 19:1197 20:1213 21:1222 22:1228 23:1216 24:1200 25:1117 26:1126 27:1120 28:1126 29:1144 30:1126 31:1094 32:1087 33:1062 34:1033 35:1030 37:1024 38:1002 39:976 40:979 41:972 42:955 43:946 44:949 45:972 46:947 47:931 48:934 49:940 50:937 52:964 53:955 54:949 55:967 57:985 58:976 59:991 60:1000 61:994 62:973 63:964 65:970 66:995 67:1008 68:1018 70:1021 71:1018 72:1012 73:1000 74:1003 75:1000 76:1003 77:1009 78:1012 79:1000 80:988 81:995 82:1010 83:1030 84:1039 85:1063 86:1063 87:1066 88:1083 89:1093 90:1105 91:1102 92:1093 93:1099 94:1096 95:1074 96:1045 97:1043 98:1042 99:1088 100:1132 101:1144 102:1177 103:1174 104:1183 105:1168 106:1147 107:1156 108:1198 109:1183 110:1171 111:1162 112:1180 113:1156 114:1141 115:1143 116:1150 117:1153 119:1165 120:1156 121:1153 122:1177 124:1174 125:1192 127:1195 128:1167 130:1141 131:1132 132:1135 133:1162 134:1174 135:1171 136:1180 137:1174 138:1150 139:1153 140:1138 141:1114 143:1102 144:1093 146:1093 147:1075 148:1063 149:1063 150:1066 151:1072 153:1054 156:1057 157:1027 158:1018 159:1036 160:1048 161:1054 162:1045 163:1057 164:1075 165:1036 166:1009 167:994 168:985 169:955 170:961 171:955 172:970 173:976'), '#f0f0f0');
  p.done();
}

function labels(id, list, x) {
  document.getElementById(id).innerHTML = list.map(function (l) {
    return '<text x="' + (x || l[1]) + '" y="' + (x ? l[1] : 12) + '">' + l[0] + '</text>';
  }).join('');
}

function drawTicks() {
  // a minus before the lot size marks an active buy
  var rows = '14:53 3747 -517 +181 多开|14:54 3746 579 +316 空开|:32 3746 589 +114 空开|:33 3745 799 -257 多平|14:55 3745 523 +185 空开|14:56 3743 718 +205 空开|:54 3741 535 -87 多平|:55 3742 -588 +189 多开|14:57 3741 565 -332 多平|:02 3742 -575 -363 空平|:05 3740 536 +177 空开|:06 3740 4959 -223 多平|:06 3740 2085 +305 空开|:07 3739 1272 +338 空开|:07 3739 1173 -449 多平|:08 3739 -1427 -971 空平|:14 3740 603 +58 空开|:54 3739 520 -189 多平|14:58 3740 705 -490 多平|:13 3744 -647 -60 空平|:31 3744 756 -415 多平|14:59 3745 -716 -416 空平|:55 3745 741 -167 多平';
  document.getElementById('ticks').innerHTML = rows.split('|').map(function (r) {
    var c = r.split(' '), up = c[2][0] === '-' ? 'up' : 'dn';
    return '<tr><td class="' + (c[0][0] === ':' ? 't s' : 't') + '">' + c[0] + '</td><td class="dn">' + c[1] + '</td><td class="' + up + '">' + c[2].replace('-', '') + '</td><td class="qty">' + c[3] + '</td><td class="' + up + '">' + c[4] + '</td></tr>';
  }).join('');
}

function drawAll() {
  drawPrice();
  drawVolume();
  drawMacd();
  drawCci();
}
labels('axis-price', [['3700', 302], ['3600', 376], ['3500', 450]], 57);
labels('axis-vol', [['180万', 37], ['90万', 92]], 55);
labels('axis-macd', [['80', 38], ['0', 82]], 55);
labels('axis-cci', [['100', 40], ['0', 62], ['-100', 85]], 54);
labels('dates', [['202309', 1], ['10', 149], ['11', 285], ['12', 461], ['202401', 617], ['02', 805], ['03', 925], ['04', 1093], ['05', 1253]]);
drawTicks();
drawAll();
window.addEventListener('resize', drawAll);
```
